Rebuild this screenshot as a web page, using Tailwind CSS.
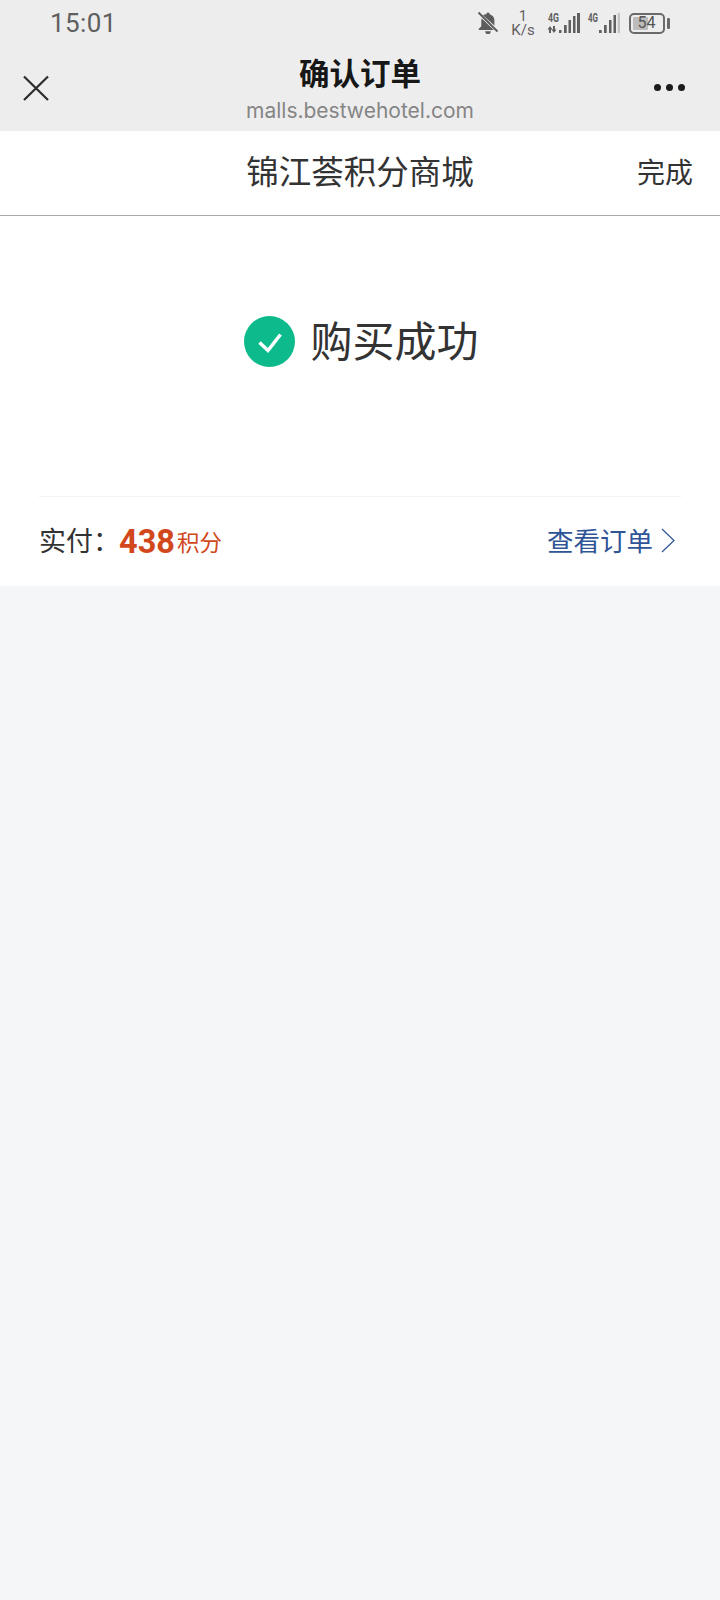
<!DOCTYPE html>
<html lang="zh-CN">
<head>
  <meta charset="UTF-8" />
  <meta name="viewport" content="width=device-width, initial-scale=1.0"/>
  <title>确认订单</title>
  <script src="https://cdn.jsdelivr.net/npm/@tailwindcss/browser@4"></script>
</head>
<body class="w-[720px] h-[1600px] overflow-hidden bg-[#f5f6f8] font-['Noto_Sans_CJK_SC','Noto_Sans',sans-serif]">

  <!-- Status bar + webview title -->
  <div class="h-[131px] bg-[#ededed] flex flex-col">
    <div class="h-[46px] flex items-center pl-[50px] pr-[50px] justify-between">
      <span class="font-['Roboto',sans-serif] text-[26px] leading-none text-[#5f5f5f] tracking-[0.4px]">15:01</span>
      <div class="flex items-center">
        <svg class="w-[22px] h-[24px]" viewBox="0 0 22 24" fill="#5c5c5c">
          <path d="M11 1.500a1.700 1.700 0 0 1 1.700 1.800c3 .8 4.700 3.200 4.700 6.300v4.800L6 4.200a7 7 0 0 1 3.300-1A1.700 1.700 0 0 1 11 1.500z"/>
          <path d="M4.800 7.500 16.800 19H1.800v-1.300l2.500-2.400V10c0-.9.200-1.700.5-2.500z"/>
          <path d="M8.200 20.200h5.600a2.800 2.800 0 0 1-5.600 0z"/>
          <path d="M1.500 1.500 20.500 20.500" stroke="#5c5c5c" stroke-width="2"/>
        </svg>
        <div class="w-[24px] ml-[12px] mb-[2px] flex flex-col items-center gap-[1px] font-['Roboto',sans-serif] text-[#5f5f5f] leading-none">
          <span class="text-[14px] h-[13px]">1</span>
          <span class="text-[15px] h-[13px] whitespace-nowrap">K/s</span>
        </div>
        <svg class="w-[34px] h-[24px] ml-[12px]" viewBox="0 0 34 24" fill="#5f5f5f">
          <text x="1" y="11" font-family="Roboto, sans-serif" font-size="12.500" font-weight="700" textLength="11" lengthAdjust="spacingAndGlyphs">4G</text>
          <path d="M0.500 18.500 3 15l2.500 3.500H4V22H2v-3.500zM6 15h2v3.500h1.500L7 22l-2.500-3.500H6zM12 19h2.500v3H12zM17 14h2.700v8H17zM21.500 9h2.500v13h-2.500zM26 5h2.500v17H26zM30 2h3v20h-3z"/>
        </svg>
        <svg class="w-[34px] h-[24px] ml-[6px]" viewBox="0 0 34 24" fill="#5f5f5f">
          <text x="1" y="11" font-family="Roboto, sans-serif" font-size="12.500" font-weight="700" textLength="10" lengthAdjust="spacingAndGlyphs">4G</text>
          <path d="M12 19h2.700v3H12zM17 14h2.700v8H17zM22 9h2.500v13H22zM26.500 4H29v18h-2.500z"/>
          <path d="M30.700 2H33v20h-2.300z" fill="#c4c4c4"/>
        </svg>
        <div class="ml-[8px] relative w-[36px] h-[21px] border-2 border-[#6a6a6a] rounded-[5px] p-[2px]">
          <div class="w-[15px] h-full bg-[#bcbcbc] rounded-[1px]"></div>
          <span class="absolute inset-0 flex items-center justify-center pr-[1px] font-['Roboto',sans-serif] text-[16px] leading-none text-[#555555]">54</span>
        </div>
        <div class="w-[3px] h-[11px] bg-[#6a6a6a] rounded-[1px] ml-[2px]"></div>
      </div>
    </div>
    <div class="flex-1 flex items-start justify-between relative">
      <svg class="w-[26px] h-[26px] ml-[23px] mt-[29px]" viewBox="0 0 26 26" fill="none" stroke="#2c2c2c" stroke-width="2.200">
        <path d="M1 1.500 25 25M25 1.500 1 25"/>
      </svg>
      <div class="absolute left-0 right-0 top-0 flex flex-col items-center">
        <span class="text-[30.500px] leading-[38px] mt-[7px] font-bold text-[#171717]">确认订单</span>
        <span class="font-['Inter',sans-serif] text-[21px] leading-[28px] mt-[6px] text-[#858585]">malls.bestwehotel.com</span>
      </div>
      <div class="flex gap-[5px] mt-[38px] mr-[35px]">
        <i class="block w-[7px] h-[7px] rounded-full bg-[#1c1c1c]"></i>
        <i class="block w-[7px] h-[7px] rounded-full bg-[#1c1c1c]"></i>
        <i class="block w-[7px] h-[7px] rounded-full bg-[#1c1c1c]"></i>
      </div>
    </div>
  </div>

  <!-- Page nav -->
  <div class="h-[85px] bg-white border-b border-[#a9a9a9] relative flex items-center justify-center pb-[6px]">
    <span class="text-[32.500px] leading-none text-[#333333]">锦江荟积分商城</span>
    <span class="absolute right-[27px] top-[26px] text-[28px] leading-none text-[#333333]">完成</span>
  </div>

  <!-- Result -->
  <div class="h-[370px] bg-white px-[39px] flex flex-col">
    <div class="h-[281px] border-b border-[#f3f3f3] flex items-start justify-center pt-[100px]">
      <div class="flex items-center pl-[3px]">
        <svg class="w-[51px] h-[51px]" viewBox="0 0 51 51">
          <circle cx="25.500" cy="25.500" r="25.500" fill="#0dba8b"/>
          <path d="M15.500 26.500 24 34.500 36.500 18.500" fill="none" stroke="#fff" stroke-width="3.500"/>
        </svg>
        <span class="ml-[15px] mb-[6px] text-[42px] leading-none text-[#333333]">购买成功</span>
      </div>
    </div>
    <div class="flex-1 flex items-center justify-between pb-[3px]">
      <div class="flex items-baseline">
        <span class="text-[27px] leading-none text-[#333333]">实付：</span>
        <span class="-ml-[1px] font-['Roboto',sans-serif] font-bold text-[32.500px] leading-none text-[#d2481c] translate-y-[2px]">438</span>
        <span class="ml-[2px] text-[22.500px] leading-none text-[#d2481c]">积分</span>
      </div>
      <div class="flex items-center">
        <span class="text-[26.500px] leading-none text-[#2f5597]">查看订单</span>
        <svg class="w-[14px] h-[25px] ml-[8px] mr-[6px]" viewBox="0 0 14 25" fill="none" stroke="#2f5597" stroke-width="1.200">
          <path d="M1 1 13 12.500 1 24"/>
        </svg>
      </div>
    </div>
  </div>

</body>
</html>
